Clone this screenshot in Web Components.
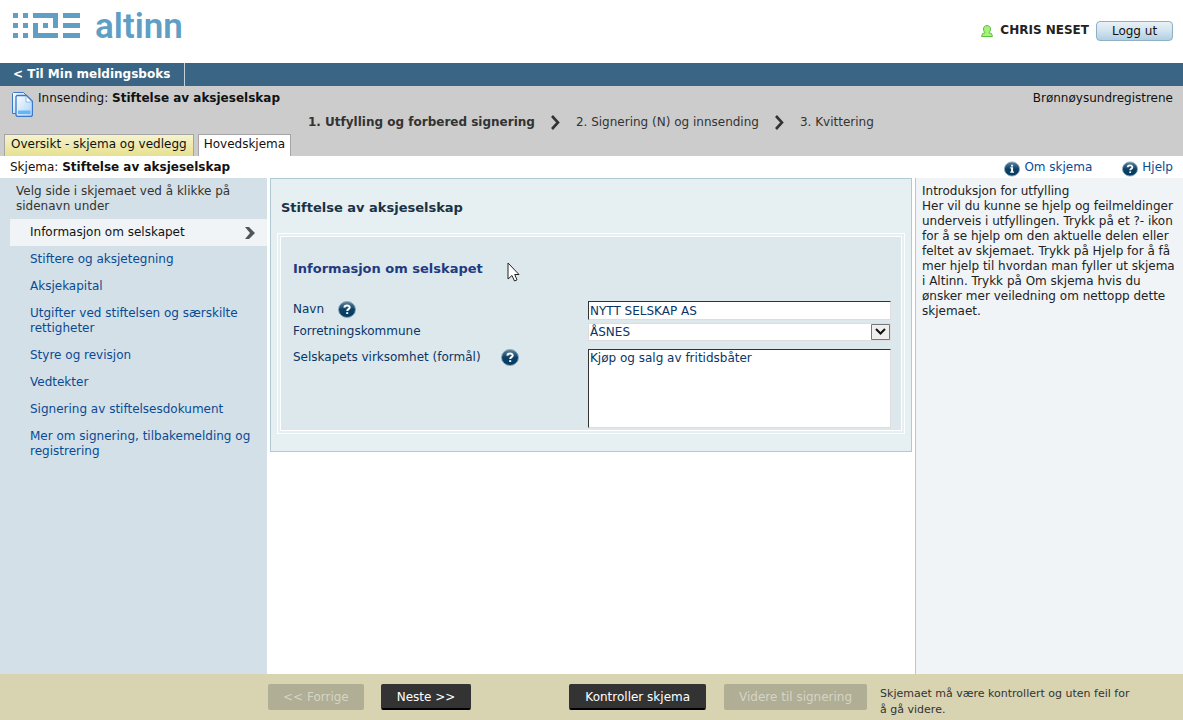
<!DOCTYPE html>
<html lang="nb">
<head>
<meta charset="utf-8">
<meta name="viewport" content="width=device-width, initial-scale=1">
<title>Stiftelse av aksjeselskap - Altinn</title>
<style>
body { margin: 0; font: 12px/15px "DejaVu Sans", Verdana, sans-serif; color: #222; background: #fff; }
</style>
</head>
<body>
<altinn-app></altinn-app>
<script>
const define = (name, html, setup) => {
  const template = document.createElement('template');
  template.innerHTML = html;
  customElements.define(name, class extends HTMLElement {
    constructor() {
      super();
      this.attachShadow({ mode: 'open' }).append(template.content.cloneNode(true));
    }
    connectedCallback() { if (setup) setup(this, this.shadowRoot); }
  });
};

/* Round information / help badge */
define('round-badge', `
<style>
:host { display: inline-block; width: 18px; height: 17px; }
svg { display: block; width: 100%; height: 100%; }
</style>
<svg viewBox="0 0 18 17" aria-hidden="true">
<defs><linearGradient id="g" x1="0" y1="0" x2="0" y2="1"><stop offset="0" stop-color="#5f859d"/><stop offset=".5" stop-color="#0c4167"/><stop offset="1" stop-color="#003a5f"/></linearGradient></defs>
<ellipse cx="9" cy="8.5" rx="8.5" ry="8" fill="url(#g)" stroke="#8fa9ba"/>
<g id="q" fill="none" stroke="#fff" stroke-width="2"><path d="M6.4 6.6C6.5 3.8 11.7 3.8 11.7 6.5C11.7 8.2 9.2 8.1 9.2 10"/><path d="M9.2 11.2V13"/></g>
<g id="i" fill="#fff"><path d="M8 3.6h2.2v2H8zM7 6.6h3.2v4.8H11.3v1.4H7v-1.4h1V8H7z"/></g>
</svg>`, (el, root) => {
  const unused = root.getElementById(el.getAttribute('kind') === 'info' ? 'q' : 'i');
  if (unused) unused.remove();
});

define('site-header', `
<style>
:host { display: flex; justify-content: space-between; height: 63px; box-sizing: border-box; padding: 0 10px 0 13px; }
.logo { display: flex; align-items: flex-start; gap: 14px; padding-top: 13px; color: #5f9fc5; text-decoration: none; }
.logo svg { width: 68px; height: 26px; }
.logo span { font: 600 35px/28px Roboto, sans-serif; }
.user { display: flex; align-items: flex-start; gap: 7px; padding-top: 21px; font-weight: bold; }
.user svg { width: 12px; height: 12px; margin-top: 4px; }
.user span { line-height: 18px; }
button { box-sizing: border-box; width: 77px; height: 20px; padding: 0; border: 1px solid #8fafc4; border-radius: 4px; background: linear-gradient(#e8f1f7, #d3e3ee 50%, #b0cfe4); color: #111; font: 12px/18px "DejaVu Sans", sans-serif; }
</style>
<a class="logo" href="#" aria-label="Altinn">
<svg viewBox="0 0 68 26" fill="#5f9fc5" aria-hidden="true"><path d="M0 0h5v5H0zM10 0h5v5h-5zM0 10h5v5H0zM10 10h5v5h-5zM0 20h5v5H0zM10 20h5v5h-5zM20 0h25v15h-5V5H20zM20 10h5v10h20v5H20zM30 10h5v5h-5zM50 0h17v5H50zM50 10h17v5H50zM50 20h17v5H50z"/></svg>
<span>altinn</span></a>
<div class="user">
<svg viewBox="0 0 12 12" aria-hidden="true"><path d="M3.6 7.2C1.6 4.6 2.2 .6 6 .6S10.4 4.6 8.4 7.2L8 7.8L10.5 8.6L11.5 11.5H.5L1.5 8.6L4 7.8z" fill="#a6f07c" stroke="#5cc238"/></svg>
<span>CHRIS NESET</span><button type="button">Logg ut</button></div>`);

define('inbox-bar', `
<style>
:host { display: flex; height: 23px; background: #3a6584; }
a { display: block; padding: 0 14px 0 13px; border-right: 1px solid #c5d2dc; color: #fff; font: bold 12px/23px "DejaVu Sans", sans-serif; text-decoration: none; }
</style>
<a href="#">&lt; Til Min meldingsboks</a>`);

define('process-header', `
<style>
:host { display: grid; grid-template-columns: 1fr auto; grid-template-rows: 24px 24px 22px; background: #ccc; color: #111; }
.title { display: flex; gap: 5px; padding-left: 12px; line-height: 24px; }
.title svg { width: 21px; height: 26px; margin-top: 6px; }
.owner { padding-right: 10px; line-height: 24px; }
ol { grid-column: 1 / -1; display: flex; align-items: center; gap: 16px; margin: 0; padding: 0 0 0 308px; list-style: none; color: #333; }
li { display: flex; align-items: center; gap: 16px; }
li svg { width: 9px; height: 15px; }
.tabs { grid-column: 1 / -1; display: flex; gap: 4px; padding-left: 4px; }
.tabs a { box-sizing: border-box; height: 22px; padding: 0 6px; border: 1px solid #a5a5a5; border-bottom: 0; background: linear-gradient(#f5f3cf, #e6e08f); color: #111; line-height: 19px; text-decoration: none; }
.tabs a.on { padding: 0 5px; background: #fff; }
</style>
<div class="title">
<svg viewBox="0 0 21 26" aria-hidden="true"><defs><linearGradient id="p" x1="0" y1="0" x2="1" y2="1"><stop offset="0" stop-color="#fafdff"/><stop offset="1" stop-color="#a9d2f7"/></linearGradient></defs>
<path d="M1.500 .5h10l4 4v17H.5V1.500z" fill="url(#p)" stroke="#3a78c9"/><path d="M5 3.500h9.500l6 6V23l-1 1.300H5l-1-1V4.500z" fill="url(#p)" stroke="#3a78c9" stroke-width="1.300"/><path d="M14 4v6h6z" fill="#fff" stroke="#8fb8e6"/><path d="M6 18.500h12.500v3.500H6z" fill="#63b5f5"/></svg>
<span>Innsending: <b>Stiftelse av aksjeselskap</b></span></div>
<div class="owner">Brønnøysundregistrene</div>
<ol>
<li><b>1. Utfylling og forbered signering</b><svg viewBox="0 0 9 15" aria-hidden="true"><path d="M1 1l6 6.500L1 14" fill="none" stroke="#333" stroke-width="2.600"/></svg></li>
<li><span>2. Signering (N) og innsending</span><svg viewBox="0 0 9 15" aria-hidden="true"><path d="M1 1l6 6.500L1 14" fill="none" stroke="#333" stroke-width="2.600"/></svg></li>
<li>3. Kvittering</li>
</ol>
<nav class="tabs"><a href="#">Oversikt - skjema og vedlegg</a><a class="on" href="#">Hovedskjema</a></nav>`);

define('form-toolbar', `
<style>
:host { display: flex; height: 22px; padding: 0 10px; color: #111; line-height: 22px; }
.name { flex: 1; }
a { display: flex; gap: 4px; margin-left: 30px; color: #0a4a94; text-decoration: none; }
round-badge { width: 16px; height: 16px; margin-top: 5px; }
</style>
<div class="name">Skjema: <b>Stiftelse av aksjeselskap</b></div>
<a href="#"><round-badge kind="info"></round-badge>Om skjema</a>
<a href="#"><round-badge></round-badge>Hjelp</a>`);

define('page-link', `
<style>
:host { display: block; }
a { display: flex; align-items: center; justify-content: space-between; min-height: 15px; padding: 6px 12px 6px 20px; color: #0a4a94; text-decoration: none; }
svg { display: none; flex: none; width: 10px; height: 12px; }
:host([current]) a { background: #f0f4f7; color: #111; }
:host([current]) svg { display: block; }
</style>
<a href="#"><span><slot></slot></span><svg viewBox="0 0 10 12" aria-hidden="true"><path d="M0 0h4l6 6-6 6H0l5-6z" fill="#555"/></svg></a>`);

define('page-menu', `
<style>
:host { display: block; box-sizing: border-box; padding: 6px 0 0 10px; background: #d3e0e7; color: #333; }
p { margin: 0 20px 5px 6px; }
</style>
<p>Velg side i skjemaet ved å klikke på sidenavn under</p>
<nav>
<page-link current>Informasjon om selskapet</page-link>
<page-link>Stiftere og aksjetegning</page-link>
<page-link>Aksjekapital</page-link>
<page-link>Utgifter ved stiftelsen og særskilte rettigheter</page-link>
<page-link>Styre og revisjon</page-link>
<page-link>Vedtekter</page-link>
<page-link>Signering av stiftelsesdokument</page-link>
<page-link>Mer om signering, tilbakemelding og registrering</page-link>
</nav>`);

define('company-form', `
<style>
:host { display: block; box-sizing: border-box; padding: 0 3px; }
.panel { position: relative; border: 1px solid #b1c8d5; background: #e6eff1; padding: 20px 6px 17px; }
h1 { margin: 0 4px 17px; color: #1a3344; font-size: 13px; line-height: 17px; }
.box { padding: 23px 10px 2px 12px; border: 4px double #fff; background: #dde8ec; background-clip: padding-box; }
h2 { margin: 0 0 24px; color: #1f3b82; font-size: 13px; line-height: 17px; }
form { display: grid; grid-template-columns: minmax(0, 1fr) 303px; color: #0a3566; }
.label { display: flex; align-items: flex-start; line-height: 17px; }
.mid { gap: 14px; }
.wide { gap: 20px; }
input, select, textarea { display: block; box-sizing: border-box; width: 100%; margin: 0; padding: 0 1px; border: 1px solid #ddd; border-radius: 0; background: #fff; color: #0a3566; font: 12px/16px "DejaVu Sans", sans-serif; }
input { height: 19px; margin-bottom: 3px; border-color: #333 #ddd #ddd #333; }
.drop { position: relative; margin-bottom: 8px; }
select { height: 18px; appearance: none; }
.drop svg { position: absolute; top: 1px; right: 1px; width: 19px; height: 16px; pointer-events: none; }
textarea { height: 79px; resize: none; border-color: #333 #ddd #ddd #333; line-height: 17px; }
.pointer { position: absolute; left: 236px; top: 83px; width: 13px; height: 20px; }
</style>
<div class="panel">
<h1>Stiftelse av aksjeselskap</h1>
<section class="box">
<h2>Informasjon om selskapet</h2>
<form>
<div class="label mid"><label for="navn">Navn</label><round-badge></round-badge></div>
<input id="navn" value="NYTT SELSKAP AS">
<div class="label"><label for="kommune">Forretningskommune</label></div>
<div class="drop"><select id="kommune"><option>ÅSNES</option></select>
<svg viewBox="0 0 19 16" aria-hidden="true"><path d="M.5.5h18v15H.5z" fill="#eee" stroke="#777"/><path d="M5 5l4.500 4.500L14 5" fill="none" stroke="#111" stroke-width="2"/></svg></div>
<div class="label wide"><label for="formal">Selskapets virksomhet (formål)</label><round-badge></round-badge></div>
<textarea id="formal">Kjøp og salg av fritidsbåter</textarea>
</form>
</section>
<svg class="pointer" viewBox="0 0 13 20" aria-hidden="true"><path d="M1 1v16l4-3.500 2.500 5.500 2.500-1.200L7.700 12.500H12z" fill="#fff" stroke="#222"/></svg>
</div>`);

define('help-panel', `
<style>
:host { display: block; box-sizing: border-box; padding: 6px 2px 0 6px; border-left: 1px solid #b1c8d5; background: #f0f4f7; }
p { margin: 0; }
</style>
<p>Introduksjon for utfylling</p>
<p>Her vil du kunne se hjelp og feilmeldinger underveis i utfyllingen. Trykk på et ?- ikon for å se hjelp om den aktuelle delen eller feltet av skjemaet. Trykk på Hjelp for å få mer hjelp til hvordan man fyller ut skjema i Altinn. Trykk på Om skjema hvis du ønsker mer veiledning om nettopp dette skjemaet.</p>`);

define('form-actions', `
<style>
:host { display: flex; align-items: flex-start; box-sizing: border-box; min-height: 46px; padding: 10px 48px 0 268px; background: #d8d4b2; }
button { box-sizing: border-box; height: 26px; margin: 0; padding: 0 15px; border: 1px solid #333; border-bottom: 2px solid #000; border-radius: 2px; background: #333; color: #fff; font: 12px/22px "DejaVu Sans", sans-serif; white-space: nowrap; }
button:disabled { padding: 0 14px; border-color: #b0ae94; background: #b0ae94; color: #d6d4c6; }
.prev { margin-right: 17px; }
.next { margin-right: 98px; }
.check { margin-right: 18px; }
p { flex: 1; margin: 2px 0 0 13px; font-size: 11px; line-height: 16px; color: #333; }
</style>
<button class="prev" type="button" disabled>&lt;&lt; Forrige</button>
<button class="next" type="button">Neste &gt;&gt;</button>
<button class="check" type="button">Kontroller skjema</button>
<button type="button" disabled>Videre til signering</button>
<p>Skjemaet må være kontrollert og uten feil for å gå videre.</p>`);

define('altinn-app', `
<style>
:host { display: flex; flex-direction: column; min-height: 100vh; }
main { flex: 1; display: grid; grid-template-columns: 267px minmax(0, 1fr) 268px; }
</style>
<site-header></site-header>
<inbox-bar></inbox-bar>
<process-header></process-header>
<form-toolbar></form-toolbar>
<main><page-menu></page-menu><company-form></company-form><help-panel></help-panel></main>
<form-actions></form-actions>`);
</script>
</body>
</html>
